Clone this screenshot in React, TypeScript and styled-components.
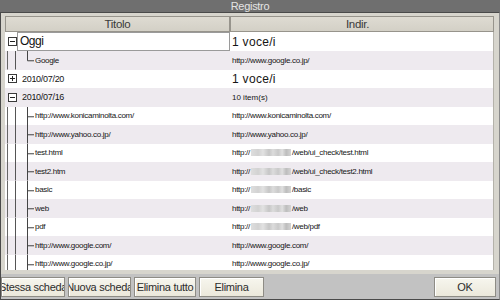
import React from "react";
import styled, { createGlobalStyle } from "styled-components";

const SANS = `"Liberation Sans", Arial, sans-serif`;

const Global = createGlobalStyle`
  html, body { margin: 0; padding: 0; background: #c2c2c2; }
  body {
    width: 500px;
    height: 300px;
    overflow: hidden;
    font-family: ${SANS};
    -webkit-font-smoothing: antialiased;
  }
  #root { width: 500px; height: 300px; }
`;

const Window = styled.div`
  width: 500px;
  height: 300px;
  display: flex;
  flex-direction: column;
  background: #c2c2c2;
`;

const TitleBar = styled.div`
  flex: none;
  height: 12px;
  background: #6f6f6f;
  color: #e4e4e4;
  font: 11px/12px ${SANS};
  letter-spacing: -0.3px;
  text-align: center;
  overflow: hidden;
`;

const Frame = styled.div`
  flex: none;
  height: 262px;
  box-sizing: border-box;
  border-top: 1px solid #4a4a4a;
  border-left: 1px solid #4a4a4a;
  border-right: 1px solid #8a8a8a;
  background: #d7d5cd;
  padding: 3px 5px 4px 4px;
  display: flex;
  flex-direction: column;
`;

const Header = styled.div`
  flex: none;
  height: 16px;
  display: grid;
  grid-template-columns: 225px 1fr;
`;

const HeadCell = styled.div<{ $inset?: number }>`
  box-sizing: border-box;
  border: 1px solid #97948c;
  background: linear-gradient(#dedbd2, #d3d0c6);
  color: #3a3a3a;
  font: 11.5px/14px ${SANS};
  letter-spacing: -0.3px;
  text-align: center;
  padding-right: ${(p) => p.$inset ?? 0}px;
`;

const Body = styled.div`
  flex: none;
  height: 238px;
  overflow: hidden;
  background: #ffffff;
  box-sizing: border-box;
  border-right: 1px solid #b4b2aa;
`;

const Row = styled.div<{ $alt?: boolean; $h: number }>`
  display: grid;
  grid-template-columns: 225px 1fr;
  height: ${(p) => p.$h}px;
  background: ${(p) => (p.$alt ? "#eeeaef" : "#ffffff")};
  color: #222;
`;

const TreeCell = styled.div`
  display: flex;
  align-items: center;
  height: 100%;
  overflow: hidden;
  white-space: nowrap;
`;

const AddrCell = styled.div<{ $size: "big" | "mid" | "small" }>`
  display: flex;
  align-items: center;
  padding-left: 2px;
  height: 100%;
  overflow: hidden;
  white-space: nowrap;
  font-family: ${SANS};
  font-size: ${(p) => (p.$size === "big" ? "12px" : "8px")};
  letter-spacing: ${(p) => (p.$size === "big" ? "0.3px" : p.$size === "mid" ? "0" : "-0.3px")};
  color: #151515;
`;

const ExpanderBox = styled.svg`
  flex: none;
  margin-left: 3px;
  width: 9px;
  height: 9px;
`;

const EditBox = styled.div`
  box-sizing: border-box;
  width: 213px;
  height: 19px;
  border: 1px solid #9a9a9a;
  background: #fff;
  font: 12px/17px ${SANS};
  letter-spacing: -0.5px;
  padding-left: 2px;
  color: #111;
`;

const TopLabel = styled.span`
  margin-left: 5px;
  font: 9px ${SANS};
  letter-spacing: -0.3px;
  color: #151515;
`;

const ChildLabel = styled.span`
  font: 8px ${SANS};
  letter-spacing: -0.3px;
  color: #151515;
`;

const Gutter = styled.svg`
  flex: none;
  width: 30px;
  height: 100%;
`;

const Blur = styled.span<{ $w: number }>`
  display: inline-block;
  width: ${(p) => p.$w}px;
  height: 7px;
  margin: 0 1px;
  background: linear-gradient(
    90deg,
    #dedede 0%,
    #d2d2d2 18%,
    #e2e2e2 30%,
    #c6c6c6 45%,
    #dcdcdc 55%,
    #c9c9c9 68%,
    #e0e0e0 78%,
    #bdbdbd 88%,
    #d4d4d4 100%
  );
  filter: blur(0.6px);
`;

const ButtonBar = styled.div`
  flex: none;
  height: 26px;
  box-sizing: border-box;
  border-left: 1px solid #4a4a4a;
  border-right: 1px solid #8a8a8a;
  border-bottom: 1px solid #4a4a4a;
  background: #c2c2c2;
  display: flex;
  align-items: flex-start;
  padding: 3px 3px 0 0;
  gap: 3px;
`;

const Button = styled.div<{ $w: number; $push?: boolean }>`
  flex: none;
  box-sizing: border-box;
  width: ${(p) => p.$w}px;
  height: 20px;
  margin-left: ${(p) => (p.$push ? "auto" : "0")};
  border: 1px solid #8e8c85;
  background: linear-gradient(#f7f6ee, #ebe8db);
  box-shadow: inset 1px 1px 0 #ffffff;
  color: #2c2c2c;
  font: 11px/18px ${SANS};
  letter-spacing: -0.3px;
  display: flex;
  justify-content: center;
  overflow: hidden;
  white-space: nowrap;
`;

const Expander = ({ open }: { open: boolean }) => (
  <ExpanderBox viewBox="0 0 9 9">
    <rect x="0.5" y="0.5" width="8" height="8" fill="#fff" stroke="#3a3a3a" />
    <line x1="2" y1="4.5" x2="7" y2="4.5" stroke="#222" />
    {!open && <line x1="4.5" y1="2" x2="4.5" y2="7" stroke="#222" />}
  </ExpanderBox>
);

const TreeLines = ({ last }: { last?: boolean }) => (
  <Gutter viewBox="0 0 30 18" preserveAspectRatio="none">
    <line x1="2.5" y1="0" x2="2.5" y2="18" stroke="#666" />
    <line x1="10.5" y1="0" x2="10.5" y2="18" stroke="#555" />
    <line x1="22.5" y1="0" x2="22.5" y2={last ? 9.5 : 18} stroke="#444" />
    <line x1="22.5" y1="9.5" x2="29" y2="9.5" stroke="#444" />
  </Gutter>
);

type Addr = { text?: string; pre?: string; blur?: number; post?: string };

type Item =
  | { kind: "top"; label: string; open: boolean; addr: string; big?: boolean }
  | { kind: "child"; label: string; last?: boolean; addr: Addr };

const items: Item[] = [
  { kind: "child", label: "Google", last: true, addr: { text: "http://www.google.co.jp/" } },
  { kind: "top", label: "2010/07/20", open: false, addr: "1 voce/i", big: true },
  { kind: "top", label: "2010/07/16", open: true, addr: "10 item(s)" },
  { kind: "child", label: "http://www.konicaminolta.com/", addr: { text: "http://www.konicaminolta.com/" } },
  { kind: "child", label: "http://www.yahoo.co.jp/", addr: { text: "http://www.yahoo.co.jp/" } },
  { kind: "child", label: "test.html", addr: { pre: "http://", blur: 40, post: "/web/ui_check/test.html" } },
  { kind: "child", label: "test2.htm", addr: { pre: "http://", blur: 40, post: "/web/ui_check/test2.html" } },
  { kind: "child", label: "basic", addr: { pre: "http://", blur: 40, post: "/basic" } },
  { kind: "child", label: "web", addr: { pre: "http://", blur: 40, post: "/web" } },
  { kind: "child", label: "pdf", addr: { pre: "http://", blur: 40, post: "/web/pdf" } },
  { kind: "child", label: "http://www.google.com/", addr: { text: "http://www.google.com/" } },
  { kind: "child", label: "http://www.google.co.jp/", addr: { text: "http://www.google.co.jp/" } },
];

const AddrText = ({ a }: { a: Addr }) =>
  a.text ? (
    <>{a.text}</>
  ) : (
    <>
      {a.pre}
      <Blur $w={a.blur ?? 40} />
      {a.post}
    </>
  );

export default function App() {
  return (
    <>
      <Global />
      <Window>
        <TitleBar>Registro</TitleBar>
        <Frame>
          <Header>
            <HeadCell>Titolo</HeadCell>
            <HeadCell $inset={9}>Indir.</HeadCell>
          </Header>
          <Body>
            <Row $h={19}>
              <TreeCell>
                <Expander open />
                <EditBox>Oggi</EditBox>
              </TreeCell>
              <AddrCell $size="big">1 voce/i</AddrCell>
            </Row>
            {items.map((it, i) => (
              <Row key={i} $h={18.5} $alt={i % 2 === 0}>
                {it.kind === "top" ? (
                  <>
                    <TreeCell>
                      <Expander open={it.open} />
                      <TopLabel>{it.label}</TopLabel>
                    </TreeCell>
                    <AddrCell $size={it.big ? "big" : "mid"}>{it.addr}</AddrCell>
                  </>
                ) : (
                  <>
                    <TreeCell>
                      <TreeLines last={it.last} />
                      <ChildLabel>{it.label}</ChildLabel>
                    </TreeCell>
                    <AddrCell $size="small">
                      <AddrText a={it.addr} />
                    </AddrCell>
                  </>
                )}
              </Row>
            ))}
          </Body>
        </Frame>
        <ButtonBar>
          <Button $w={64}>Stessa scheda</Button>
          <Button $w={63}>Nuova scheda</Button>
          <Button $w={62}>Elimina tutto</Button>
          <Button $w={65}>Elimina</Button>
          <Button $w={62} $push>
            OK
          </Button>
        </ButtonBar>
      </Window>
    </>
  );
}
